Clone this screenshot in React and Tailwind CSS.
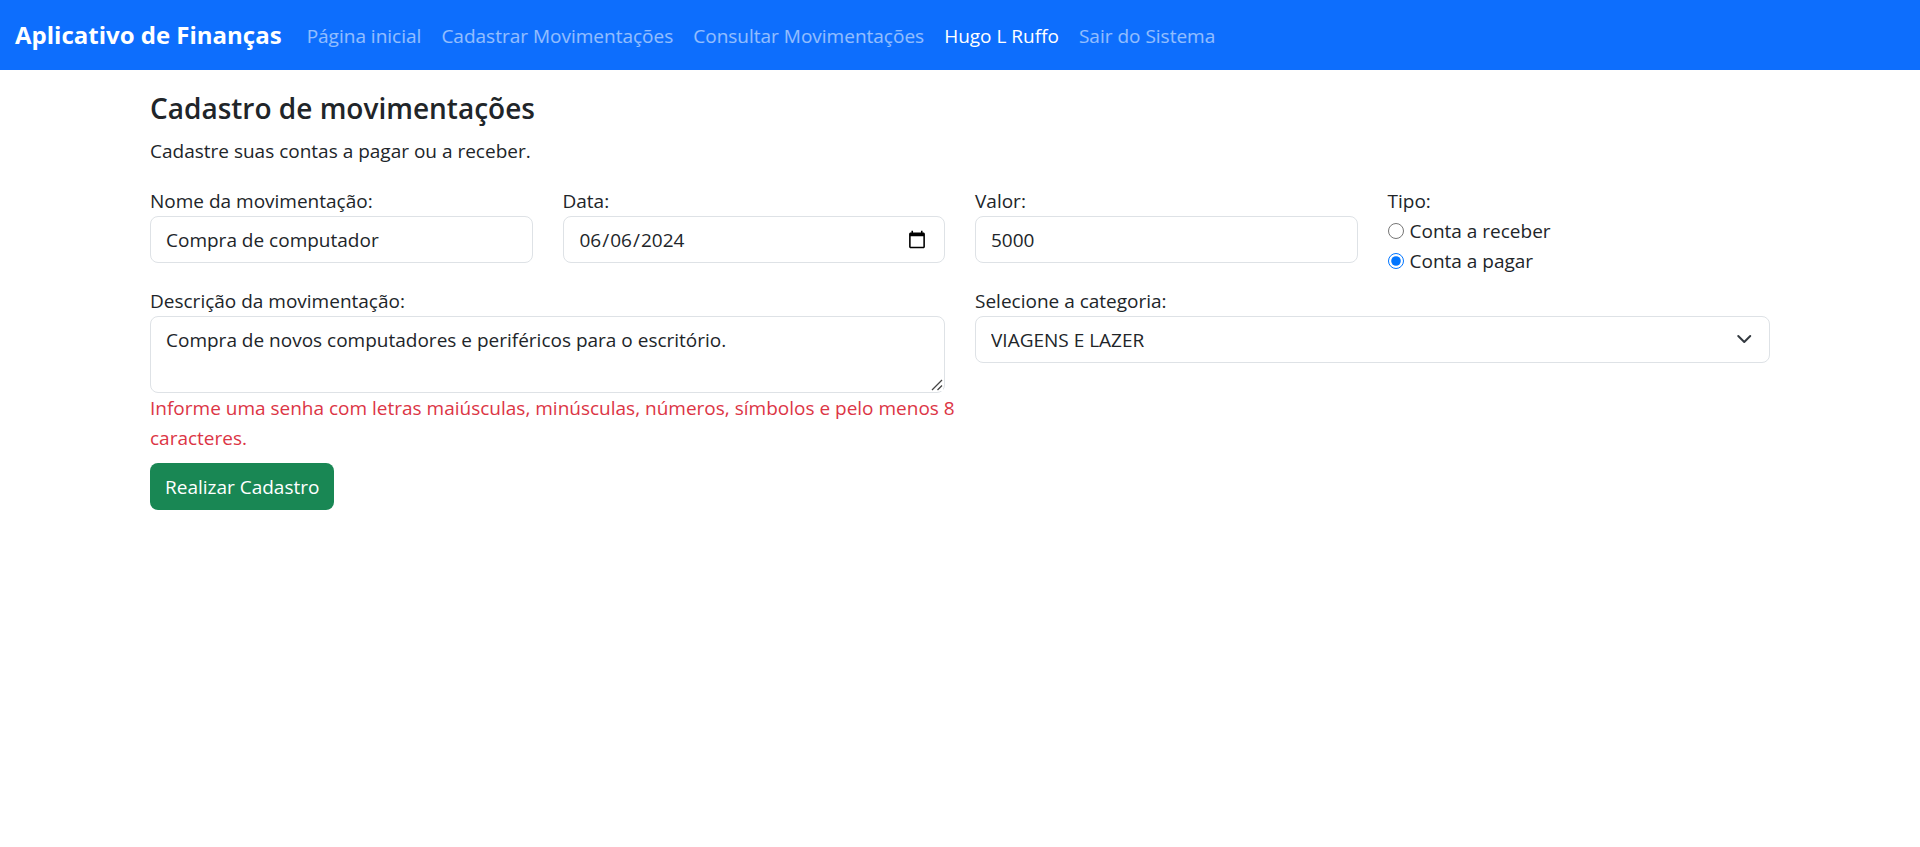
import { useState } from "react";
import clsx from "clsx";

const navLinks = [
  { label: "Página inicial" },
  { label: "Cadastrar Movimentações" },
  { label: "Consultar Movimentações" },
  { label: "Hugo L Ruffo", active: true },
  { label: "Sair do Sistema" },
];

const categories = ["VIAGENS E LAZER", "ALIMENTAÇÃO", "EDUCAÇÃO", "SAÚDE"];

const control =
  "block w-full rounded-lg border border-[#dee2e6] bg-white px-[15px] text-[#212529] leading-[30px]";

function Navbar() {
  return (
    <nav className="flex min-h-[70px] items-center bg-[#0d6efd] px-[15px]">
      <a href="#" className="mr-[15px] text-2xl font-bold text-white">
        Aplicativo de Finanças
      </a>
      <ul className="flex items-center">
        {navLinks.map(({ label, active }) => (
          <li key={label}>
            <a href="#" className={clsx("block px-[10px] pt-[11px] pb-[9px]", active ? "text-white" : "text-white/55")}>
              {label}
            </a>
          </li>
        ))}
      </ul>
    </nav>
  );
}

function Field({ id, label, className, children }) {
  return (
    <div className={className}>
      <label htmlFor={id} className="block">
        {label}
      </label>
      {children}
    </div>
  );
}

function TypeOption({ label, value, selected, onSelect }) {
  return (
    <label className="flex items-center gap-[6px]">
      <input
        type="radio"
        name="tipo"
        value={value}
        checked={selected === value}
        onChange={() => onSelect(value)}
        className="size-4 accent-[#0075ff]"
      />
      {label}
    </label>
  );
}

export default function App() {
  const [type, setType] = useState("pagar");

  return (
    <div className="min-h-screen bg-white font-['Open_Sans',sans-serif] text-[19px] leading-[30px] text-[#212529]">
      <Navbar />
      <main className="mx-[150px] mt-5">
        <h1 className="mb-[10px] text-[28px] leading-9 font-semibold">Cadastro de movimentações</h1>
        <p className="mb-5">Cadastre suas contas a pagar ou a receber.</p>

        <form onSubmit={(event) => event.preventDefault()}>
          <div className="mb-[10px] grid grid-cols-4 gap-[30px]">
            <Field id="nome" label="Nome da movimentação:">
              <input id="nome" type="text" defaultValue="Compra de computador" className={clsx(control, "h-[47px]")} />
            </Field>
            <Field id="data" label="Data:">
              <input
                id="data"
                type="date"
                defaultValue="2024-06-06"
                className={clsx(control, "h-[47px] [&::-webkit-calendar-picker-indicator]:size-5")}
              />
            </Field>
            <Field id="valor" label="Valor:">
              <input id="valor" type="text" defaultValue="5000" className={clsx(control, "h-[47px]")} />
            </Field>
            <fieldset>
              <legend>Tipo:</legend>
              <TypeOption label="Conta a receber" value="receber" selected={type} onSelect={setType} />
              <TypeOption label="Conta a pagar" value="pagar" selected={type} onSelect={setType} />
            </fieldset>
          </div>

          <div className="mb-[10px] grid grid-cols-2 gap-[30px]">
            <div>
              <Field id="descricao" label="Descrição da movimentação:">
                <div className="relative">
                  <textarea
                    id="descricao"
                    defaultValue="Compra de novos computadores e periféricos para o escritório."
                    className={clsx(control, "h-[77px] resize-y py-2")}
                  />
                  <svg
                    viewBox="0 0 12 12"
                    className="pointer-events-none absolute right-[2px] bottom-[2px] size-3 stroke-[#454545]"
                    strokeWidth="1.3"
                    aria-hidden="true"
                  >
                    <rect width="12" height="12" fill="#fff" stroke="none" />
                    <path d="M1 11 11 1M6.500 11 11 6.500" />
                  </svg>
                </div>
              </Field>
              <p className="-mr-[15px] text-[#dc3545]">
                Informe uma senha com letras maiúsculas, minúsculas, números, símbolos e pelo menos 8 caracteres.
              </p>
            </div>
            <Field id="categoria" label="Selecione a categoria:">
              <div className="relative">
                <select id="categoria" className={clsx(control, "h-[47px] appearance-none pr-[45px]")}>
                  {categories.map((name) => (
                    <option key={name}>{name}</option>
                  ))}
                </select>
                <svg
                  viewBox="0 0 16 16"
                  className="pointer-events-none absolute top-[13px] right-4 size-5 fill-none stroke-[#343a40] stroke-2"
                  strokeLinecap="round"
                  strokeLinejoin="round"
                  aria-hidden="true"
                >
                  <path d="m2 5 6 6 6-6" transform="translate(1.8 1.6) scale(.8)" />
                </svg>
              </div>
            </Field>
          </div>

          <button type="submit" className="h-[47px] rounded-lg bg-[#198754] px-[15px] text-white">
            Realizar Cadastro
          </button>
        </form>
      </main>
    </div>
  );
}
